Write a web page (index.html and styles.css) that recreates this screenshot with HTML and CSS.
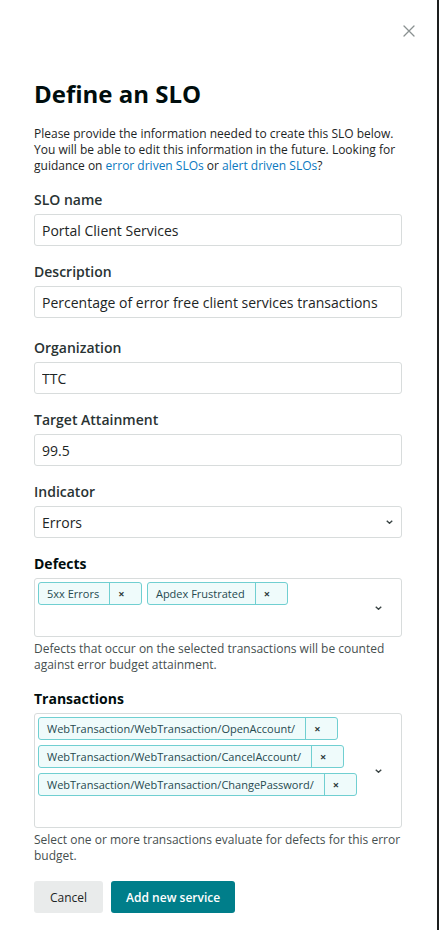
FILE: index.html
```html
<!DOCTYPE html>
<html lang="en">
<head>
<meta charset="utf-8">
<title>Define an SLO</title>
<link rel="stylesheet" href="styles.css">
</head>
<body>
<div class="page">
  <aside class="panel">
    <div class="close-row">
      <button class="close" aria-label="Close">
        <svg width="12" height="12" viewBox="0 0 12 12"><path d="M1 1 L11 11 M11 1 L1 11" stroke="#8a9191" stroke-width="1.3" fill="none" stroke-linecap="round"/></svg>
      </button>
    </div>
    <h1 class="title">Define an SLO</h1>
    <p class="intro">Please provide the information needed to create this SLO below. You will be able to edit this information in the future. Looking for <span class="intro-tail">guidance on <a href="#">error driven SLOs</a> or <a href="#">alert driven SLOs</a>?</span></p>

    <div class="field">
      <label class="label">SLO name</label>
      <input class="input" type="text" value="Portal Client Services">
    </div>
    <div class="field field-wide">
      <label class="label">Description</label>
      <input class="input" type="text" value="Percentage of error free client services transactions">
    </div>
    <div class="field">
      <label class="label">Organization</label>
      <input class="input" type="text" value="TTC">
    </div>
    <div class="field">
      <label class="label">Target Attainment</label>
      <input class="input" type="text" value="99.5">
    </div>
    <div class="field">
      <label class="label">Indicator</label>
      <div class="select">
        <span>Errors</span>
        <svg class="chev" width="7" height="4" viewBox="0 0 7 4"><path d="M0.75 0.75 L3.5 3.25 L6.25 0.75" stroke="#3b4545" stroke-width="1.4" fill="none"/></svg>
      </div>
    </div>

    <div class="field">
      <label class="label label-strong">Defects</label>
      <div class="multi">
        <div class="multi-main">
          <div class="tags">
            <span class="tag"><span class="tag-label">5xx Errors</span><span class="tag-x">×</span></span>
            <span class="tag"><span class="tag-label">Apdex Frustrated</span><span class="tag-x">×</span></span>
          </div>
          <div class="multi-input"></div>
        </div>
        <div class="multi-chev">
          <svg width="7" height="4" viewBox="0 0 7 4"><path d="M0.75 0.75 L3.5 3.25 L6.25 0.75" stroke="#3b4545" stroke-width="1.4" fill="none"/></svg>
        </div>
      </div>
      <p class="help">Defects that occur on the selected transactions will be counted against error budget attainment.</p>
    </div>

    <div class="field">
      <label class="label label-strong">Transactions</label>
      <div class="multi">
        <div class="multi-main">
          <div class="tags">
            <span class="tag"><span class="tag-label">WebTransaction/WebTransaction/OpenAccount/</span><span class="tag-x">×</span></span>
            <span class="tag"><span class="tag-label">WebTransaction/WebTransaction/CancelAccount/</span><span class="tag-x">×</span></span>
            <span class="tag"><span class="tag-label">WebTransaction/WebTransaction/ChangePassword/</span><span class="tag-x">×</span></span>
          </div>
          <div class="multi-input"></div>
        </div>
        <div class="multi-chev">
          <svg width="7" height="4" viewBox="0 0 7 4"><path d="M0.75 0.75 L3.5 3.25 L6.25 0.75" stroke="#3b4545" stroke-width="1.4" fill="none"/></svg>
        </div>
      </div>
      <p class="help">Select one or more transactions evaluate for defects for this error budget.</p>
    </div>

    <div class="actions">
      <button class="btn btn-secondary">Cancel</button>
      <button class="btn btn-primary">Add new service</button>
    </div>
  </aside>
</div>
</body>
</html>
```

FILE: styles.css
```css
* { box-sizing: border-box; }

html, body {
  margin: 0;
  padding: 0;
  background: #ffffff;
}

body {
  font-family: "Open Sans", "DejaVu Sans", sans-serif;
  color: #2a3434;
}

.page {
  display: flex;
  min-height: 930px;
}

.panel {
  width: 439px;
  min-height: 930px;
  border-right: 2px solid #1d1f1f;
  padding: 25px 35px 0 34px;
}

.close-row {
  display: flex;
  justify-content: flex-end;
  margin-right: -13px;
  height: 12px;
}

.close {
  border: 0;
  background: none;
  padding: 0;
  width: 12px;
  height: 12px;
  display: block;
  cursor: pointer;
}

.close svg { display: block; }

.title {
  margin: 41px 0 0;
  font-size: 24px;
  line-height: 32px;
  font-weight: 700;
  color: #000d0d;
}

.intro {
  margin: 16px 0 0;
  font-size: 12px;
  line-height: 16px;
  color: #1d2525;
}

.intro-tail {
  display: inline-block;
  line-height: 16px;
}

.intro a {
  color: #0b79bf;
  text-decoration: none;
}

.field {
  margin-top: 16px;
}

.field:first-of-type { margin-top: 16px; }

.field-wide + .field { margin-top: 20px; }

.label {
  display: block;
  font-size: 14px;
  line-height: 20px;
  font-weight: 600;
  color: #293333;
  margin-bottom: 4px;
}

.label-strong {
  font-weight: 700;
  color: #000d0d;
}

.input {
  display: block;
  width: 100%;
  height: 32px;
  border: 1px solid #d8dcdc;
  border-radius: 3px;
  padding: 0 7px;
  font-family: inherit;
  font-size: 14px;
  color: #1d2525;
  background: #fff;
  outline: none;
}

.select {
  display: flex;
  align-items: center;
  justify-content: space-between;
  height: 32px;
  border: 1px solid #d8dcdc;
  border-radius: 3px;
  padding: 0 8px 0 7px;
  font-size: 14px;
  color: #1d2525;
}

.chev { display: block; }

.multi {
  display: flex;
  border: 1px solid #d8dcdc;
  border-radius: 3px;
  padding: 3px 0 0 3px;
}

.multi-main {
  flex: 1;
  display: flex;
  flex-direction: column;
}

.tags {
  display: flex;
  flex-wrap: wrap;
  gap: 5px 4.5px;
}

.tag {
  display: inline-flex;
  height: 23px;
  border: 1px solid #70cfd1;
  border-radius: 3px;
  background: #effbfb;
  font-size: 11px;
  line-height: 21px;
  color: #264a50;
}

.tag-label {
  padding: 0 10px 0 8px;
  white-space: nowrap;
}

.tag-x {
  border-left: 1px solid #70cfd1;
  padding: 0 17px 0 8px;
  font-size: 11px;
  font-weight: 700;
  color: #2d3a3c;
}

.multi-input {
  height: 26px;
  margin-top: 5px;
}

.multi-chev {
  display: flex;
  align-items: center;
  padding: 0 19px 3px 16px;
}

.multi-chev svg { display: block; }

.help {
  margin: 4px 0 0;
  font-size: 12px;
  line-height: 16px;
  color: #464f4f;
}

.actions {
  display: flex;
  gap: 8px;
  margin-top: 17px;
}

.btn {
  height: 32px;
  padding: 0 16px;
  border: 0;
  border-radius: 3px;
  font-family: inherit;
  font-size: 12px;
  cursor: pointer;
}

.btn-secondary {
  background: #e9ebeb;
  color: #1d2525;
}

.btn-primary {
  background: #007e8a;
  color: #ffffff;
  font-weight: 600;
  padding: 0 15px;
}
```
